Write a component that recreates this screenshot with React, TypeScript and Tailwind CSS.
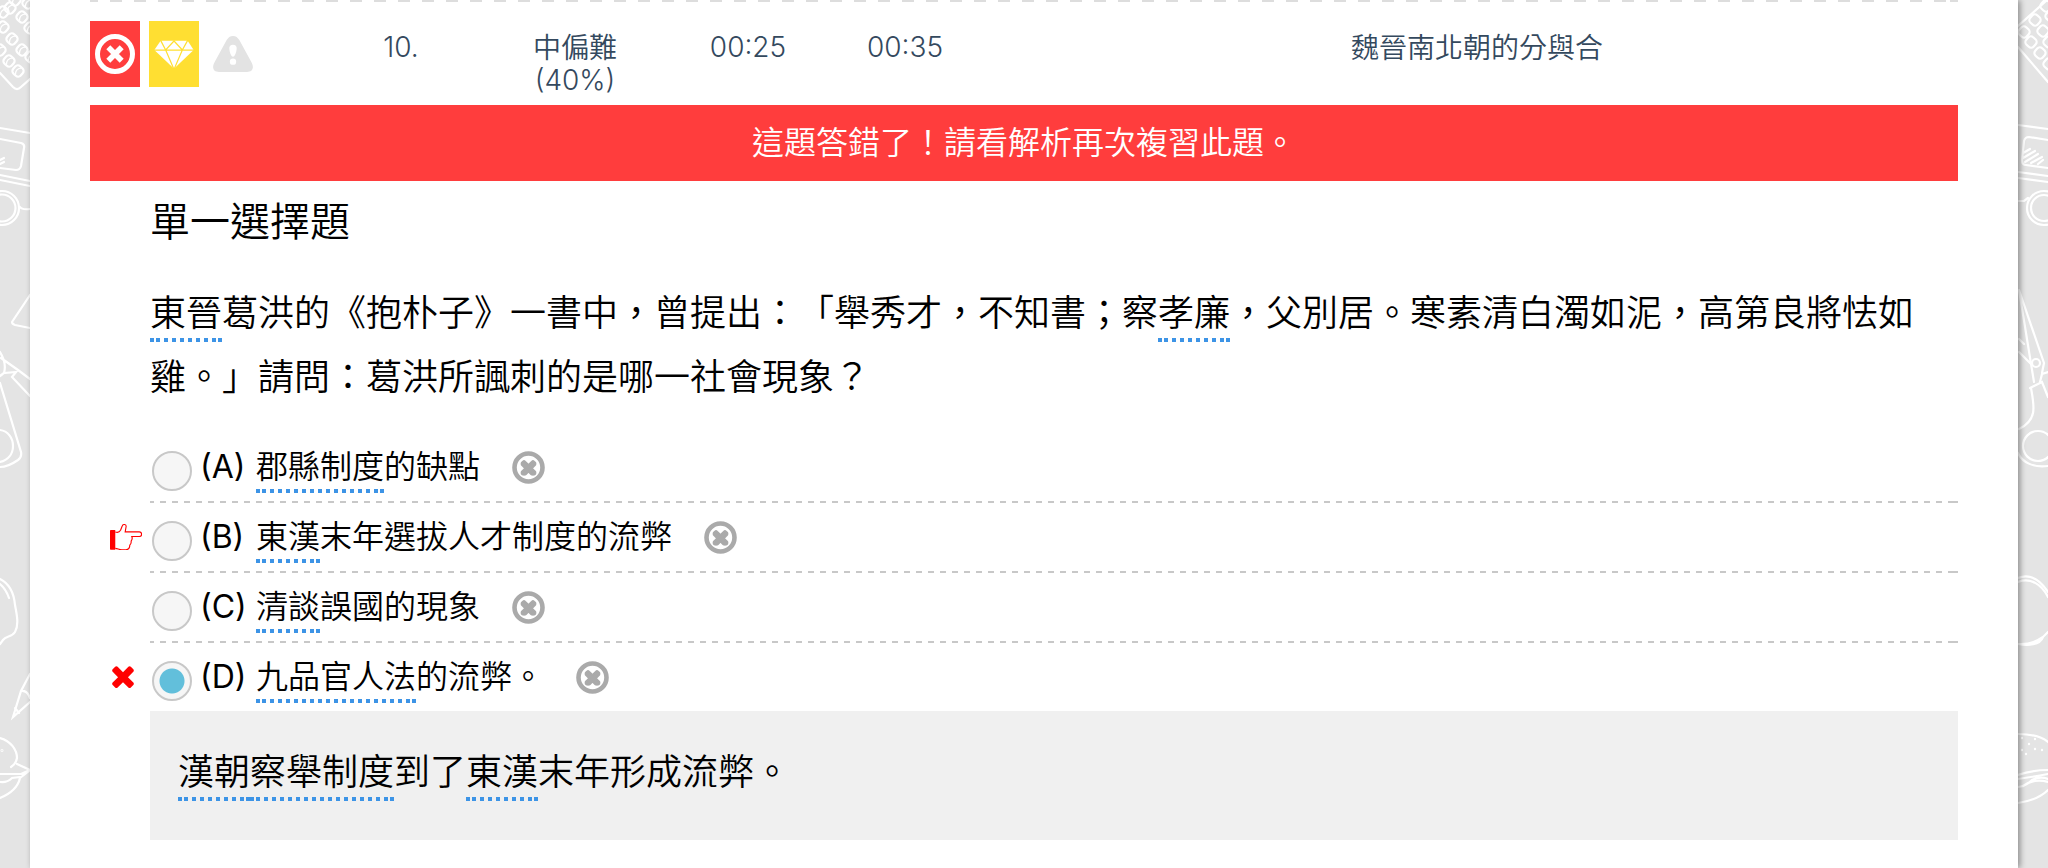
import { useState, type ReactNode } from "react";

const CROSS =
  "M1490 1322q0 40-28 68l-136 136q-28 28-68 28t-68-28l-294-294-294 294q-28 28-68 28t-68-28l-136-136q-28-28-28-68t28-68l294-294-294-294q-28-28-28-68t28-68l136-136q28-28 68-28t68 28l294 294 294-294q28-28 68-28t68 28l136 136q28 28 28 68t-28 68l-294 294 294 294q28 28 28 68z";

function CrossIcon({ className }: { className: string }) {
  return (
    <svg viewBox="302 238 1188 1316" className={className} fill="currentColor" aria-hidden="true">
      <path d={CROSS} />
    </svg>
  );
}

function CircleCross({ className }: { className: string }) {
  return (
    <svg viewBox="0 0 40 40" className={className} fill="none" aria-hidden="true">
      <circle cx="20" cy="20" r="17.5" stroke="currentColor" strokeWidth="5" />
      <path d="M13.3 13.3l13.4 13.4M26.7 13.3l-13.4 13.4" stroke="currentColor" strokeWidth="5.6" />
    </svg>
  );
}

function EliminateIcon() {
  return (
    <svg viewBox="0 0 33 33" className="size-[33px]" fill="none" aria-hidden="true">
      <circle cx="16.5" cy="16.5" r="14" stroke="currentColor" strokeWidth="4.6" />
      <svg x="8.5" y="8.5" width="16" height="16" viewBox="250 250 1292 1292">
        <path d={CROSS} fill="currentColor" stroke="currentColor" strokeWidth="140" />
      </svg>
    </svg>
  );
}

function GemIcon() {
  return (
    <svg viewBox="0 0 120 86" className="w-10" aria-hidden="true">
      <path d="M20 2H101L119 30 60 86 1 30Z" fill="#fff" />
      <path
        d="M0 30.5H120M19 0L35 30 59 86M102 0L85 30 61 86M20 1L35 30 60 3 85 30 101 1"
        fill="none"
        stroke="#ffdf32"
        strokeWidth="3.6"
      />
    </svg>
  );
}

function WarningIcon() {
  return (
    <svg viewBox="0 0 120 108" className="w-10" aria-hidden="true">
      <path d="M60 0C69 0 74 5 79 12L115 78C125 96 118 108 102 108H18C2 108-5 96 5 78L41 12C46 5 51 0 60 0Z" fill="#e3e3e3" />
      <path d="M49 38C48 30 53 26 60 26S72 30 71 38C70 48 66 62 60 62S50 48 49 38Z" fill="#fff" />
      <circle cx="60" cy="77" r="9.5" fill="#fff" />
    </svg>
  );
}

function HandIcon() {
  return (
    <svg viewBox="0 0 97 80" className="w-8" aria-hidden="true">
      <path d="M0 20q0-2 2-2h14v60H2q-2 0-2-2Z" fill="#f00" />
      <path
        d="M16 24C24 27 29 24 32 19L37 6C39 0 49 0 49 7L46 24H89C98 24 98 38 89 38H66C69 44 67 48 64 52C65 57 63 61 60 64C60 73 56 78 48 78H36C28 78 24 75 16 74"
        fill="none"
        stroke="#f00"
        strokeWidth="3.4"
      />
    </svg>
  );
}

const LEFT_KEYS = [
  [10, 8], [22, 17], [30, 28], [15, 0], [28, 3], [3, 27], [12, 39], [22, 50], [0, 50], [9, 61], [18, 71], [31, 57], [3, 12],
];

function LeftDoodles() {
  return (
    <svg viewBox="0 0 30 868" className="h-[868px] w-full" fill="none" stroke="#fff" strokeWidth="2.2" strokeLinecap="round" aria-hidden="true">
      {LEFT_KEYS.map(([x, y]) => (
        <g key={`${x}-${y}`} transform={`translate(${x} ${y}) rotate(-48)`}>
          <rect x="-5" y="-5" width="10" height="10" rx="3.5" />
          <path d="M-5 1Q0-4 5 1" strokeWidth="1.2" />
        </g>
      ))}
      <path d="M0 73L13 87Q17 91 21 87L30 79" />
      <path d="M0 128L30 133M0 139L21 143Q25 144 24 148L21 166Q20 170 16 170L0 168M0 160L4 158M0 164L4 162M0 175L30 181M0 180L30 186M20 207Q22 210 30 209" />
      <circle cx="2" cy="208" r="17" />
      <circle cx="2" cy="208" r="13.5" />
      <path d="M30 295L12 322Q12 324 15 325L30 328" />
      <path d="M0 352C5 360 6 366 4 373L16 372 12 377 30 396M0 376L4 373M1 358L18 370 30 379M0 383L21 452Q22 457 18 460Q8 467 0 467M0 430C8 431 13 438 13 446S8 460 0 462" />
      <path d="M0 579C10 584 14 594 15 605C17 615 19 625 15 632C12 637 6 636 3 640L0 644M0 584Q6 589 9 598" />
      <path d="M30 674L21 691 13 717 30 702M21 691Q27 690 30 698M15 708L19 713" />
      <path d="M0 738C11 741 17 750 17 758Q16 764 11 767M17 764L30 770 21 774 0 774M30 770L20 778Q17 791 0 798M0 782Q7 783 12 778L20 777" />
      <circle cx="2" cy="750.5" r=".4" />
    </svg>
  );
}

const RIGHT_KEYS = [
  [6, 32], [13, 42], [22, 53], [17, 20], [25, 31], [31, 42], [28, 6], [33, 16], [31, 64],
];
const SEEDS = [
  [4, 738], [17, 739], [11, 744], [17, 749], [24, 750], [4, 750], [8, 754],
];

function RightDoodles() {
  return (
    <svg viewBox="0 0 30 868" className="h-[868px] w-full" fill="none" stroke="#fff" strokeWidth="2.2" strokeLinecap="round" aria-hidden="true">
      {RIGHT_KEYS.map(([x, y]) => (
        <g key={`${x}-${y}`} transform={`translate(${x} ${y}) rotate(-48)`}>
          <rect x="-5" y="-5" width="10" height="10" rx="3.5" />
        </g>
      ))}
      <path d="M0 26L28 1M0 47L30 82" />
      <path d="M0 125L30 129M30 140L11 137Q7 137 6 141L4 160Q4 165 8 165L30 168M5 153L12 149M5 158L17 151M7 162L20 154M13 163L24 157M20 164L25 160M0 172L30 176M0 178L30 182M0 201L6 201 10 198" />
      <circle cx="26" cy="208" r="17" />
      <circle cx="26" cy="208" r="13" />
      <path d="M1 290L26 363 24 373M1 290L16 382M1 339L6 344M1 352L13 364M24 374L30 372M12 388L24 382 30 397M13 388C16 405 20 420 1 429M24 374L22 382" />
      <circle cx="18" cy="363" r="4" />
      <ellipse cx="20" cy="446" rx="15" ry="15" />
      <path d="M0 453C4 462 15 468 30 466" />
      <path d="M0 578C12 573 22 580 30 592M0 582C13 577 24 585 30 597M0 644C10 646 22 645 25 637M0 644Q14 645 25 637L30 632" />
      <path d="M0 734Q20 734 30 742M0 775Q15 770 30 770M0 779Q14 777 30 774M0 787Q8 786 14 780Q22 776 30 779M5 786Q16 778 30 782M0 803Q20 800 30 790" />
      {SEEDS.map(([x, y]) => (
        <circle key={`${x}-${y}`} cx={x} cy={y} r=".5" strokeWidth="1.4" />
      ))}
    </svg>
  );
}

function Term({ children }: { children: ReactNode }) {
  return (
    <span className="bg-[linear-gradient(#3d94e6,#3d94e6),linear-gradient(#3d94e6,#3d94e6),linear-gradient(90deg,#3d94e6_50%,transparent_50%)] bg-[length:4px_4px,4px_4px,8px_4px] bg-[position:left_bottom,right_bottom,6px_bottom] pb-1.5 [background-repeat:no-repeat,no-repeat,repeat-x]">
      {children}
    </span>
  );
}

const OPTIONS = [
  { id: "A", term: "郡縣制度", rest: "的缺點" },
  { id: "B", term: "東漢", rest: "末年選拔人才制度的流弊" },
  { id: "C", term: "清談", rest: "誤國的現象" },
  { id: "D", term: "九品官人法", rest: "的流弊。" },
];
const ANSWER = "B";
const SUBMITTED = "D";

export default function App() {
  const [choice, setChoice] = useState(SUBMITTED);

  return (
    <div
      lang="zh-Hant"
      className="grid min-h-screen grid-cols-[30px_1fr_30px] overflow-hidden bg-[#e4e4e4] font-['Noto_Sans_CJK_TC',sans-serif] font-[350] text-black [text-spacing-trim:space-all]"
    >
      <LeftDoodles />
      <main className="z-10 bg-white px-15 shadow-[2px_0_6px_rgba(0,0,0,0.4)]">
        <div className="h-0.5 bg-[linear-gradient(#dddddd,#dddddd),linear-gradient(90deg,#dddddd_50%,transparent_50%)] bg-[length:8px_2px,24px_2px] bg-[position:right_0,20px_0] [background-repeat:no-repeat,repeat-x]" />
        <table className="w-full table-fixed text-center text-[28px] leading-8 text-[#34495e]">
          <tbody>
            <tr className="align-top">
              <td className="w-[244px] pt-[19px] pb-[18px]">
                <div className="flex items-center gap-[9px]">
                  <span role="img" aria-label="答錯" className="flex h-[66px] w-[50px] items-center justify-center bg-[#ff3d3d] text-white">
                    <CircleCross className="size-10" />
                  </span>
                  <button type="button" aria-label="收藏" className="flex h-[66px] w-[50px] items-center justify-center bg-[#ffdf32]">
                    <GemIcon />
                  </button>
                  <button type="button" aria-label="回報問題" className="flex h-[66px] w-[50px] items-center justify-center">
                    <WarningIcon />
                  </button>
                </div>
              </td>
              <td className="w-[134px] pt-[29px] font-['Inter',sans-serif] font-light">10.</td>
              <td className="w-[214px] pt-7">
                中偏難
                <br />
                <span className="font-['Inter',sans-serif] font-light">(40%)</span>
              </td>
              <td className="w-[132px] pt-[29px] font-['Inter',sans-serif] font-light">00:25</td>
              <td className="w-[182px] pt-[29px] font-['Inter',sans-serif] font-light">00:35</td>
              <td className="pt-7">魏晉南北朝的分與合</td>
            </tr>
          </tbody>
        </table>

        <p className="bg-[#ff3d3d] pt-[13px] pb-[19px] text-center text-[32px] leading-11 text-white">這題答錯了！請看解析再次複習此題。</p>

        <section>
          <h2 className="mt-2.5 pl-15 text-[40px] leading-14">單一選擇題</h2>
          <p className="mt-[31px] pl-15 text-4xl leading-16">
            <Term>東晉</Term>葛洪的《抱朴子》一書中，曾提出：「舉秀才，不知書；察<Term>孝廉</Term>
            ，父別居。寒素清白濁如泥，高第良將怯如雞。」請問：葛洪所諷刺的是哪一社會現象？
          </p>

          <ul className="mt-[27px] text-[32px] leading-[62px]">
            {OPTIONS.map(({ id, term, rest }) => (
              <li key={id} className="group grid grid-cols-[60px_1fr]">
                <div className="flex items-center pb-0.5 pl-5">
                  {id === ANSWER && <HandIcon />}
                  {id === SUBMITTED && id !== ANSWER && <CrossIcon className="ml-0.5 h-6 w-[22px] text-[#ff0000]" />}
                </div>
                <div className="flex h-[70px] items-start gap-8 bg-[linear-gradient(#c8c8c8,#c8c8c8),linear-gradient(90deg,#c8c8c8_50%,transparent_50%)] bg-[length:4px_2px,12px_2px] bg-[position:right_bottom,10px_bottom] [background-repeat:no-repeat,repeat-x] group-last:h-17 group-last:bg-none">
                  <label className="flex items-start pl-0.5">
                    <input
                      type="radio"
                      name="answer"
                      checked={choice === id}
                      onChange={() => setChoice(id)}
                      className="mt-[18px] mr-2 size-10 appearance-none rounded-full border-2 border-[#c8c8c8] bg-[#f6f6f6] checked:bg-[radial-gradient(circle,#62bfdb_12px,#f6f6f6_13px)]"
                    />
                    <span>
                      <span className="inline-block w-14 font-['Inter',sans-serif] font-normal">({id})</span>
                      <Term>{term}</Term>
                      {rest}
                    </span>
                  </label>
                  <button type="button" aria-label={`刪去選項 ${id}`} className="mt-[18px] text-[#aaaaaa]">
                    <EliminateIcon />
                  </button>
                </div>
              </li>
            ))}
          </ul>

          <p className="ml-15 bg-[#f0f0f0] px-7 pt-[26px] pb-[39px] text-4xl leading-16">
            <Term>漢朝</Term>
            <Term>察舉制度</Term>到了<Term>東漢</Term>末年形成流弊。
          </p>
        </section>
      </main>
      <RightDoodles />
    </div>
  );
}
